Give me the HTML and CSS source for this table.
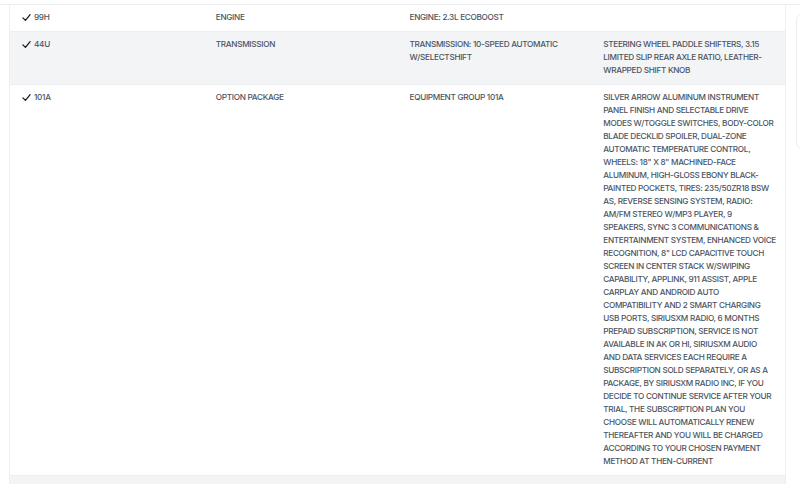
FILE: index.html
```html
<!DOCTYPE html>
<html lang="en">
<head>
  <meta charset="UTF-8">
  <meta name="viewport" content="width=device-width, initial-scale=1.0">
  <title>Build Sheet Options</title>
  <link rel="stylesheet" href="styles.css">
</head>
<body>
  <div class="topbar"></div>
  <div class="page">
    <div class="options">
      <table class="option-table">
        <tbody>
          <tr>
            <td><span class="code"><svg class="check" viewBox="0 0 10 10"><path d="M1 5.4 L3.8 8.2 L9 1.8"/></svg>99H</span></td>
            <td>ENGINE</td>
            <td>ENGINE: 2.3L ECOBOOST</td>
            <td></td>
          </tr>
          <tr class="alt">
            <td><span class="code"><svg class="check" viewBox="0 0 10 10"><path d="M1 5.4 L3.8 8.2 L9 1.8"/></svg>44U</span></td>
            <td>TRANSMISSION</td>
            <td>TRANSMISSION: 10-SPEED AUTOMATIC<br>W/SELECTSHIFT</td>
            <td class="lines">STEERING WHEEL PADDLE SHIFTERS, 3.15<br>LIMITED SLIP REAR AXLE RATIO, LEATHER-<br>WRAPPED SHIFT KNOB</td>
          </tr>
          <tr>
            <td><span class="code"><svg class="check" viewBox="0 0 10 10"><path d="M1 5.4 L3.8 8.2 L9 1.8"/></svg>101A</span></td>
            <td>OPTION PACKAGE</td>
            <td>EQUIPMENT GROUP 101A</td>
            <td class="lines">SILVER ARROW ALUMINUM INSTRUMENT<br>PANEL FINISH AND SELECTABLE DRIVE<br>MODES W/TOGGLE SWITCHES, BODY-COLOR<br>BLADE DECKLID SPOILER, DUAL-ZONE<br>AUTOMATIC TEMPERATURE CONTROL,<br>WHEELS: 18" X 8" MACHINED-FACE<br>ALUMINUM, HIGH-GLOSS EBONY BLACK-<br>PAINTED POCKETS, TIRES: 235/50ZR18 BSW<br>AS, REVERSE SENSING SYSTEM, RADIO:<br>AM/FM STEREO W/MP3 PLAYER, 9<br>SPEAKERS, SYNC 3 COMMUNICATIONS &amp;<br>ENTERTAINMENT SYSTEM, ENHANCED VOICE<br>RECOGNITION, 8" LCD CAPACITIVE TOUCH<br>SCREEN IN CENTER STACK W/SWIPING<br>CAPABILITY, APPLINK, 911 ASSIST, APPLE<br>CARPLAY AND ANDROID AUTO<br>COMPATIBILITY AND 2 SMART CHARGING<br>USB PORTS, SIRIUSXM RADIO, 6 MONTHS<br>PREPAID SUBSCRIPTION, SERVICE IS NOT<br>AVAILABLE IN AK OR HI, SIRIUSXM AUDIO<br>AND DATA SERVICES EACH REQUIRE A<br>SUBSCRIPTION SOLD SEPARATELY, OR AS A<br>PACKAGE, BY SIRIUSXM RADIO INC, IF YOU<br>DECIDE TO CONTINUE SERVICE AFTER YOUR<br>TRIAL, THE SUBSCRIPTION PLAN YOU<br>CHOOSE WILL AUTOMATICALLY RENEW<br>THEREAFTER AND YOU WILL BE CHARGED<br>ACCORDING TO YOUR CHOSEN PAYMENT<br>METHOD AT THEN-CURRENT</td>
          </tr>
          <tr class="alt last">
            <td></td>
            <td></td>
            <td></td>
            <td></td>
          </tr>
        </tbody>
      </table>
    </div>
    <div class="side-card"></div>
  </div>
</body>
</html>
```

FILE: styles.css
```css
body {
  margin: 0;
  font-family: Inter, "Noto Sans", Arial, sans-serif;
  background-color: #ffffff;
  color: #4b5563;
  overflow: hidden;
}
.topbar {
  height: 4px;
  border-bottom: 1px solid #eceef1;
}
.page {
  display: flex;
  align-items: flex-start;
  gap: 10px;
  padding-left: 9px;
}
.options {
  width: 775px;
  flex-shrink: 0;
  border-left: 1px solid #eceef1;
  border-right: 1px solid #eceef1;
}
.option-table {
  width: 100%;
  border-collapse: collapse;
  table-layout: fixed;
}
.option-table td {
  width: 25%;
  padding: 6px 12px 7px;
  vertical-align: top;
  font-size: 8.2px;
  font-weight: 500;
  line-height: 13px;
  letter-spacing: -0.3px;
  border-bottom: 1px solid #eceef1;
}
.option-table td.lines {
  white-space: nowrap;
}
.option-table tr.alt td {
  background-color: #f3f4f6;
}
.option-table tr.last td {
  height: 30px;
}
.code {
  display: flex;
  align-items: center;
  gap: 3px;
  height: 13px;
}
.check {
  display: block;
  width: 9px;
  height: 9px;
  fill: none;
  stroke: #111827;
  stroke-width: 1.4;
  stroke-linecap: round;
  stroke-linejoin: round;
}
.side-card {
  margin-top: 9px;
  width: 40px;
  height: 133px;
  flex-shrink: 0;
  border: 1px solid #eceef1;
  border-radius: 6px;
}
```
